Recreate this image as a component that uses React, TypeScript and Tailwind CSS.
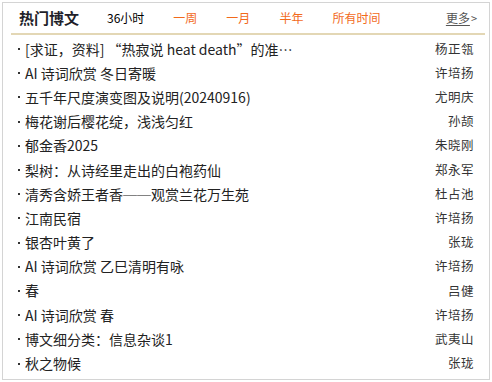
import React from 'react';

type Post = {
  title: string;
  author: string;
};

const posts: Post[] = [
  { title: '[求证，资料] “热寂说 heat death”的准…', author: '杨正瓴' },
  { title: 'AI 诗词欣赏 冬日寄暖', author: '许培扬' },
  { title: '五千年尺度演变图及说明(20240916)', author: '尤明庆' },
  { title: '梅花谢后樱花绽，浅浅匀红', author: '孙颉' },
  { title: '郁金香2025', author: '朱晓刚' },
  { title: '梨树：从诗经里走出的白袍药仙', author: '郑永军' },
  { title: '清秀含娇王者香──观赏兰花万生苑', author: '杜占池' },
  { title: '江南民宿', author: '许培扬' },
  { title: '银杏叶黄了', author: '张珑' },
  { title: 'AI 诗词欣赏 乙巳清明有咏', author: '许培扬' },
  { title: '春', author: '吕健' },
  { title: 'AI 诗词欣赏 春', author: '许培扬' },
  { title: '博文细分类：信息杂谈1', author: '武夷山' },
  { title: '秋之物候', author: '张珑' },
];

const tabs = ['一周', '一月', '半年', '所有时间'];

export default function App() {
  return (
    <div className="w-[492px] h-[382px] bg-white p-[2px] font-['Noto_Sans_CJK_SC',sans-serif]">
      <div className="w-[488px] h-[378px] border border-[#d4d4d4] flex flex-col">
        <div className="h-[30px] flex items-center pl-[16px] pr-[12px] text-[12px]">
          <span className="text-[15px] font-bold text-[#1f1f2a] mr-[28px]">热门博文</span>
          <span className="text-black mr-[29px]">36小时</span>
          {tabs.map((t) => (
            <span key={t} className="text-[#f26a1b] mr-[29px]">
              {t}
            </span>
          ))}
          <span className="ml-auto text-[#555] flex items-center">
            <span className="underline underline-offset-2">更多</span>
            <span className="text-[11px] ml-[1px]">&gt;</span>
          </span>
        </div>
        <div className="h-[2px] bg-[#e3d7b5] ml-[8px] mr-[4px]" />
        <ul className="pt-[2px] pl-[15px] pr-[15px]">
          {posts.map((p, i) => (
            <li
              key={i}
              className="h-[24.2px] flex items-center justify-between text-[14px] text-[#222]"
            >
              <span className="flex items-center whitespace-nowrap">
                <span className="w-[2px] h-[2px] bg-[#333] mr-[5px]" />
                {p.title}
              </span>
              <span className="text-[12.5px] tracking-[0.5px] text-[#333]">{p.author}</span>
            </li>
          ))}
        </ul>
      </div>
    </div>
  );
}
